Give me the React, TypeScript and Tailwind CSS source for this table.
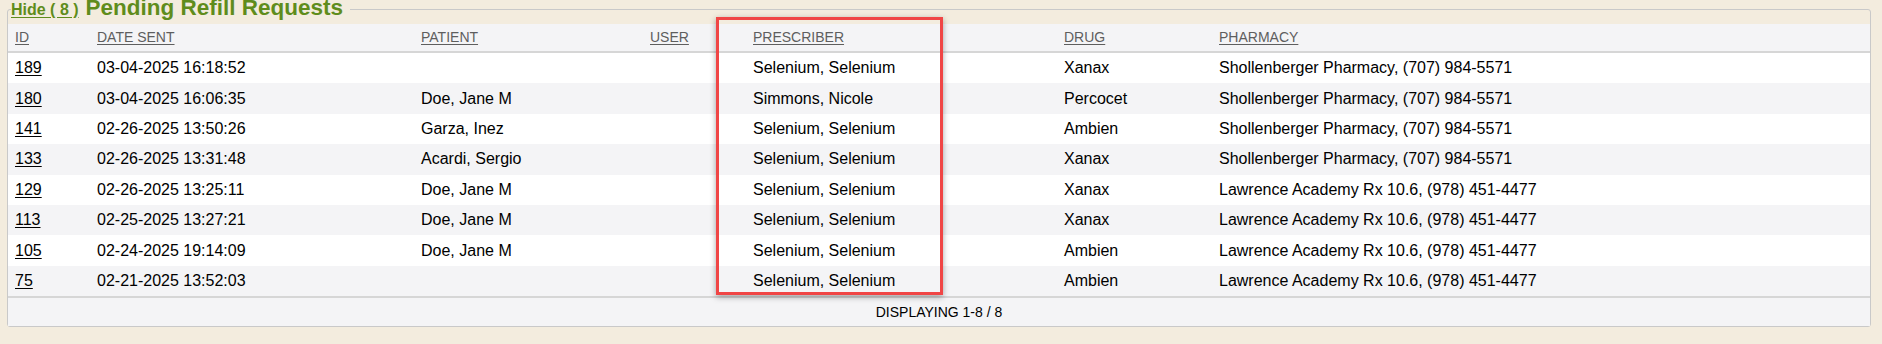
import React from "react";

type Row = {
  id: string;
  date: string;
  patient: string;
  user: string;
  prescriber: string;
  drug: string;
  pharmacy: string;
};

const SH = "Shollenberger Pharmacy, (707) 984-5571";
const LA = "Lawrence Academy Rx 10.6, (978) 451-4477";
const SS = "Selenium, Selenium";

const rows: Row[] = [
  { id: "189", date: "03-04-2025 16:18:52", patient: "", user: "", prescriber: SS, drug: "Xanax", pharmacy: SH },
  { id: "180", date: "03-04-2025 16:06:35", patient: "Doe, Jane M", user: "", prescriber: "Simmons, Nicole", drug: "Percocet", pharmacy: SH },
  { id: "141", date: "02-26-2025 13:50:26", patient: "Garza, Inez", user: "", prescriber: SS, drug: "Ambien", pharmacy: SH },
  { id: "133", date: "02-26-2025 13:31:48", patient: "Acardi, Sergio", user: "", prescriber: SS, drug: "Xanax", pharmacy: SH },
  { id: "129", date: "02-26-2025 13:25:11", patient: "Doe, Jane M", user: "", prescriber: SS, drug: "Xanax", pharmacy: LA },
  { id: "113", date: "02-25-2025 13:27:21", patient: "Doe, Jane M", user: "", prescriber: SS, drug: "Xanax", pharmacy: LA },
  { id: "105", date: "02-24-2025 19:14:09", patient: "Doe, Jane M", user: "", prescriber: SS, drug: "Ambien", pharmacy: LA },
  { id: "75", date: "02-21-2025 13:52:03", patient: "", user: "", prescriber: SS, drug: "Ambien", pharmacy: LA },
];

const headers = ["ID", "DATE SENT", "PATIENT", "USER", "PRESCRIBER", "DRUG", "PHARMACY"];

const grid = "grid grid-cols-[82px_324px_229px_103px_311px_155px_1fr]";

export default function App() {
  return (
    <div
      className="relative w-[1882px] h-[344px] bg-[#f3ecde] overflow-hidden"
      style={{ fontFamily: '"Liberation Sans", Arial, sans-serif' }}
    >
      <fieldset className="ml-[7px] mr-[11px] border border-[#c9c9c9] rounded-[3px] bg-[#f3ecde]">
        <legend className="ml-[3px] pr-[7px] flex items-baseline leading-[16px]">
          <a className="text-[16px] font-bold text-[#5f8c1c] underline underline-offset-[2px]">Hide ( 8 )</a>
          <span className="ml-[7px] text-[22.5px] font-bold text-[#5f8c1c]">Pending Refill Requests</span>
        </legend>
        <div className="mt-[6px] bg-white">
          <div className={`${grid} h-[29px] items-center bg-[#f4f4f6] border-b-2 border-[#d6d6d6]`}>
            {headers.map((h) => (
              <div key={h} className="px-[7px] text-[14px] text-[#5e5e5e] underline underline-offset-[2px]">
                {h}
              </div>
            ))}
          </div>
          {rows.map((r, i) => (
            <div
              key={r.id}
              className={`${grid} h-[30.4px] items-center text-[16px] text-black ${i % 2 === 1 ? "bg-[#f4f4f6]" : "bg-white"}`}
            >
              <div className="px-[7px] underline underline-offset-[2px]">{r.id}</div>
              <div className="px-[7px]">{r.date}</div>
              <div className="px-[7px]">{r.patient}</div>
              <div className="px-[7px]">{r.user}</div>
              <div className="px-[7px]">{r.prescriber}</div>
              <div className="px-[7px]">{r.drug}</div>
              <div className="px-[7px]">{r.pharmacy}</div>
            </div>
          ))}
          <div className="h-[30px] flex items-center justify-center bg-[#f4f4f6] border-t-2 border-[#d6d6d6] text-[14px] text-black uppercase">
            Displaying 1-8 / 8
          </div>
        </div>
      </fieldset>
      <div className="absolute left-[716px] top-[17px] w-[227px] h-[278px] border-[3px] border-[#f04545] shadow-[0_2px_6px_rgba(0,0,0,0.35)] pointer-events-none" />
    </div>
  );
}
